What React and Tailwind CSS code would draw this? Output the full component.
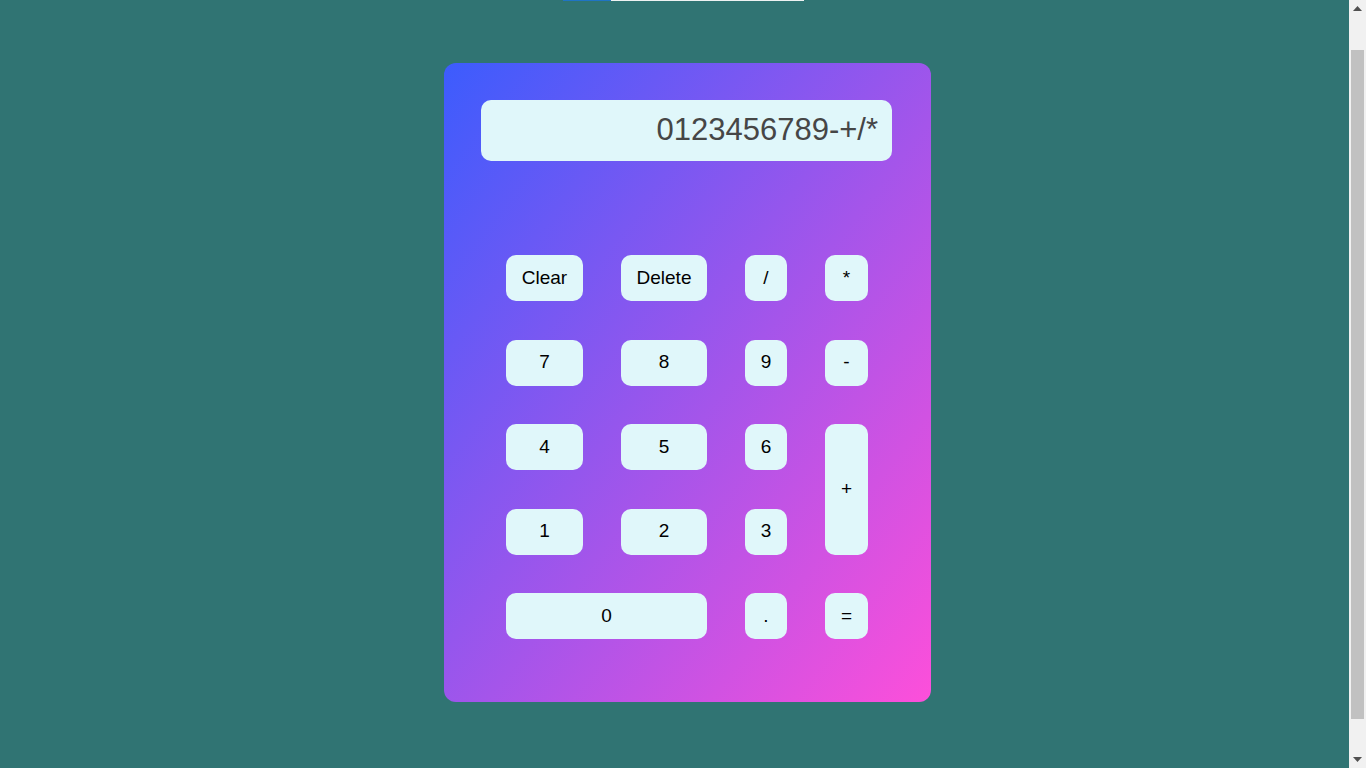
import React, { useLayoutEffect, useEffect } from "react";

const btn =
  "flex items-center justify-center rounded-[10px] bg-[#e0f7fa] pb-[2px] text-black text-[19px] leading-none font-['Liberation_Sans',Arial,sans-serif]";

function FakeScrollbar() {
  return (
    <div className="fixed right-0 top-0 z-10 flex h-screen w-[17px] flex-col bg-[#f1f1f1]">
      <div className="flex h-[17px] items-center justify-center">
        <svg width="9" height="5" viewBox="0 0 9 5">
          <polygon points="0,5 4.5,0 9,5" fill="#505050" />
        </svg>
      </div>
      <div className="mx-[2px] mt-[33px] h-[669px] bg-[#c1c1c1]" />
      <div className="mt-auto flex h-[17px] items-center justify-center">
        <svg width="9" height="5" viewBox="0 0 9 5">
          <polygon points="0,0 9,0 4.5,5" fill="#505050" />
        </svg>
      </div>
    </div>
  );
}

export default function App() {
  useLayoutEffect(() => {
    window.scrollTo(0, 38);
  }, []);
  useEffect(() => {
    window.scrollTo(0, 38);
    const t = setTimeout(() => window.scrollTo(0, 38), 50);
    return () => clearTimeout(t);
  }, []);

  return (
    <div className="min-h-[843px] w-full bg-[#307473] font-['Liberation_Sans',Arial,sans-serif]">
      <FakeScrollbar />
      <div className="flex h-[39px] items-end">
        <div className="ml-[563px] flex h-[20px]">
          <div className="w-[48px] bg-[#1f74c4]" />
          <div className="w-[193px] bg-[#eef2f2]" />
        </div>
      </div>
      <div className="flex justify-center pl-[9px] pt-[62px] pb-[103px]">
        <div className="flex h-[639px] w-[487px] flex-col rounded-[12px] bg-[linear-gradient(to_bottom_right,#3c5cfd,#fd4fda)] pl-[37px] pr-[39px] pt-[37px]">
          <div className="flex h-[61px] w-[411px] items-center justify-end rounded-[10px] bg-[#e0f7fa] pb-[1px] pr-[14px] text-[31px] text-[#464646]">
            0123456789-+/*
          </div>
          <div className="ml-[25px] mt-[94px] grid grid-cols-[77px_86px_42px_43px] grid-rows-[46px_46px_46px_46px_46px] gap-x-[38px] gap-y-[38.5px]">
            <button className={btn}>Clear</button>
            <button className={btn}>Delete</button>
            <button className={btn}>/</button>
            <button className={btn}>*</button>
            <button className={btn}>7</button>
            <button className={btn}>8</button>
            <button className={btn}>9</button>
            <button className={btn}>-</button>
            <button className={btn}>4</button>
            <button className={btn}>5</button>
            <button className={btn}>6</button>
            <button className={btn + " row-span-2"}>+</button>
            <button className={btn}>1</button>
            <button className={btn}>2</button>
            <button className={btn}>3</button>
            <button className={btn + " col-span-2"}>0</button>
            <button className={btn}>.</button>
            <button className={btn}>=</button>
          </div>
        </div>
      </div>
    </div>
  );
}
